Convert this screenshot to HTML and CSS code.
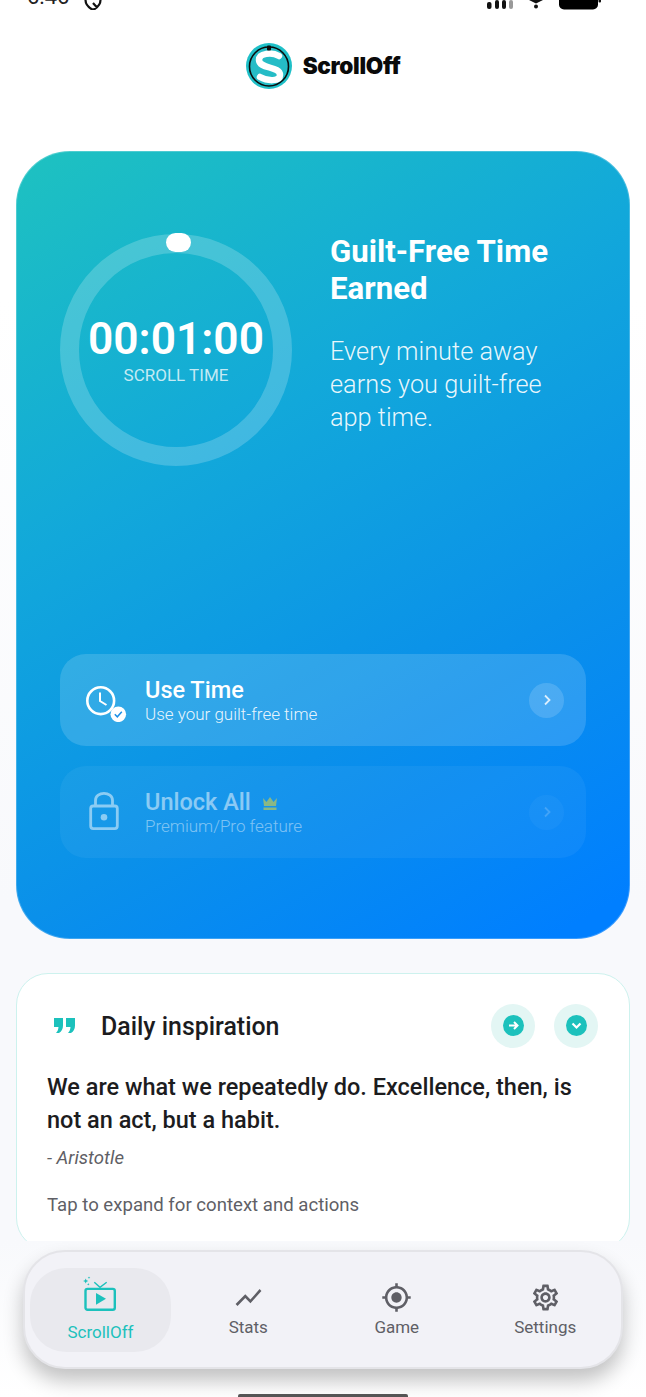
FILE: index.html
```html
<!DOCTYPE html>
<html lang="en">
<head>
  <meta charset="UTF-8">
  <meta name="viewport" content="width=device-width, initial-scale=1.0">
  <title>ScrollOff</title>
  <link rel="stylesheet" href="styles.css">
</head>
<body>

  <div id="screen">
    <div class="content">

      <!-- Status bar, cut off by the top of the screen -->
      <div class="status">
        <div class="status-left">
          <span class="clock-text">6:46</span>
          <svg class="status-pin" width="18" height="14" viewBox="0 0 18 14"><path d="M1.500 0v2c0 4.500 3 7.500 7.500 10 4.500-2.500 7.500-5.500 7.500-10V0M9 5l4 4.500" fill="none" stroke="#111" stroke-width="2.200"/></svg>
        </div>
        <svg class="status-right" width="116" height="10" viewBox="0 0 116 10">
          <rect x="0" y="2" width="4.500" height="7" rx="2" fill="#111"/>
          <rect x="8" y="0" width="4" height="9" rx="2" fill="#111"/>
          <rect x="15" y="0" width="4" height="9" rx="2" fill="#111"/>
          <rect x="22" y="0" width="4" height="9" rx="2" fill="#999"/>
          <path d="M42 0h14l-7 3.500z" fill="#111"/>
          <circle cx="49" cy="6.500" r="2" fill="#111"/>
          <rect x="72" y="-9" width="39" height="18.500" rx="5" fill="#000"/>
          <rect x="111.500" y="-4" width="2.500" height="6.500" rx="1" fill="#111"/>
        </svg>
      </div>

      <!-- Logo -->
      <div class="brand">
        <svg width="46" height="46" viewBox="0 0 46 46">
          <circle cx="23" cy="23" r="23" fill="#1fc0c8"/>
          <circle cx="23" cy="23.500" r="19.500" fill="#25bcc6" stroke="#0b0b0b" stroke-width="1.600"/>
          <path d="M33 13C26 9 13 10 13 17c0 9 21 6 21 15 0 7-13 6-20 2" fill="none" stroke="#fff" stroke-width="6.500" stroke-linecap="round"/>
          <rect x="21" y="2.500" width="4" height="5" rx="1" fill="#0b0b0b"/>
        </svg>
        <span class="brand-name">ScrollOff</span>
      </div>

      <!-- Main gradient card -->
      <section class="hero">
        <div class="hero-top">
          <div class="ring">
            <svg class="ring-track" width="234" height="234" viewBox="0 0 234 234">
              <circle cx="117" cy="117" r="106.500" fill="none" stroke="rgba(255,255,255,0.2)" stroke-width="19"/>
            </svg>
            <span class="ring-thumb"></span>
            <div class="ring-time">00:01:00</div>
            <div class="ring-label">SCROLL TIME</div>
          </div>
          <div class="hero-copy">
            <h2>Guilt-Free Time Earned</h2>
            <p>Every minute away earns you guilt-free app time.</p>
          </div>
        </div>

        <div class="actions">
          <div class="action">
            <svg class="action-icon" width="44" height="44" viewBox="0 0 44 44">
              <circle cx="16.700" cy="22.700" r="13.400" fill="none" stroke="#fff" stroke-width="2.600"/>
              <path d="M16 14.500v8.500l6.500 4" fill="none" stroke="#fff" stroke-width="2"/>
              <circle cx="34.300" cy="36.300" r="7.800" fill="#fff"/>
              <path d="M30.800 36.300l2.500 2.500 4.500-5" fill="none" stroke="#1b8fe6" stroke-width="1.500"/>
            </svg>
            <div class="action-text">
              <div class="action-title">Use Time</div>
              <div class="action-sub">Use your guilt-free time</div>
            </div>
            <span class="chevron">
              <svg width="12" height="14" viewBox="0 0 12 14"><path d="M4 2.500L8.500 7 4 11.500" fill="none" stroke="#fff" stroke-opacity="0.8" stroke-width="1.800"/></svg>
            </span>
          </div>

          <div class="action locked">
            <svg class="action-icon" width="44" height="44" viewBox="0 0 44 44">
              <path d="M11.500 15v-4.500c0-9.500 17-9.500 17 0V15" fill="none" stroke="#fff" stroke-width="2.800"/>
              <rect x="6.700" y="16" width="26.600" height="22.600" rx="2.500" fill="none" stroke="#fff" stroke-width="2.800"/>
              <circle cx="20" cy="27.300" r="3.300" fill="#fff"/>
            </svg>
            <div class="action-text">
              <div class="action-title">Unlock All
                <svg class="crown" width="16" height="15" viewBox="0 0 16 15"><path d="M1 2l3.500 4L8 1l3.500 5L15 2l-1 8H2zM1.500 11.500h13V14h-13z" fill="#ffdc1e"/></svg>
              </div>
              <div class="action-sub">Premium/Pro feature</div>
            </div>
            <span class="chevron">
              <svg width="12" height="14" viewBox="0 0 12 14"><path d="M4 2.500L8.500 7 4 11.500" fill="none" stroke="#fff" stroke-opacity="0.8" stroke-width="1.800"/></svg>
            </span>
          </div>
        </div>
      </section>

      <!-- Quote card, runs under the tab bar -->
      <section class="quote">
        <div class="quote-head">
          <svg class="quote-mark" width="21" height="15" viewBox="0 0 21 15"><path d="M0 0h9v7.500C9 11 7.500 13.500 5 15H2c1.500-1.500 2.300-3.300 2.500-6H0zM12 0h9v7.500c0 3.500-1.500 6-4 7.500h-3c1.500-1.500 2.300-3.300 2.500-6H12z" fill="#1cc1bc"/></svg>
          <h3>Daily inspiration</h3>
          <span class="round-btn">
            <span class="round-inner">
              <svg width="13" height="13" viewBox="0 0 13 13"><path d="M2 6.500h8M7 3l3.500 3.500L7 10" fill="none" stroke="#fff" stroke-width="2"/></svg>
            </span>
          </span>
          <span class="round-btn">
            <span class="round-inner">
              <svg width="13" height="13" viewBox="0 0 13 13"><path d="M2.500 4.500l4 4 4-4" fill="none" stroke="#fff" stroke-width="2.200"/></svg>
            </span>
          </span>
        </div>
        <p class="quote-text">We are what we repeatedly do. Excellence, then, is not an act, but a habit.</p>
        <p class="quote-author">- Aristotle</p>
        <p class="quote-hint">Tap to expand for context and actions</p>
      </section>
    </div>

    <!-- Bottom tab bar -->
    <nav class="tabbar">
      <div class="tab active">
        <svg width="38" height="38" viewBox="0 0 38 38">
          <path d="M3.700 2.400l.8 1.800 1.800.8-1.800.8-.8 1.800-.8-1.800-1.800-.8 1.800-.8zM7 .4l.4.9.9.4-.9.4-.4.9-.4-.9-.9-.4.9-.4zM6.300 7l.4.9.9.4-.9.4-.4.9-.4-.9-.9-.4.9-.4z" fill="#1cc1bc"/>
          <path d="M12.300 6.300l5.700 5 6.700-5" fill="none" stroke="#1cc1bc" stroke-width="1.400"/>
          <rect x="3.500" y="12.900" width="29.300" height="20.900" rx="2" fill="none" stroke="#1cc1bc" stroke-width="2.400"/>
          <path d="M14 17v11.700l10-5.900z" fill="#1cc1bc"/>
        </svg>
        <span>ScrollOff</span>
      </div>
      <div class="tab">
        <svg width="31" height="31" viewBox="0 0 24 24"><path d="M3.500 18.490l6-6.010 4 4L22 6.920l-1.410-1.410-7.090 7.970-4-4L2 16.990z" fill="#5f5f66"/></svg>
        <span>Stats</span>
      </div>
      <div class="tab">
        <svg width="31" height="31" viewBox="0 0 24 24"><path d="M12 8c-2.210 0-4 1.790-4 4s1.790 4 4 4 4-1.790 4-4-1.790-4-4-4zm8.940 3c-.46-4.170-3.770-7.480-7.940-7.940V1h-2v2.060C6.830 3.520 3.520 6.830 3.060 11H1v2h2.060c.46 4.170 3.770 7.480 7.940 7.940V23h2v-2.060c4.170-.46 7.480-3.770 7.940-7.940H23v-2h-2.060zM12 19c-3.870 0-7-3.130-7-7s3.130-7 7-7 7 3.130 7 7-3.130 7-7 7z" fill="#5f5f66"/></svg>
        <span>Game</span>
      </div>
      <div class="tab">
        <svg width="31" height="31" viewBox="0 0 24 24"><path d="M19.430 12.980c.04-.32.07-.64.07-.98 0-.34-.03-.66-.07-.98l2.110-1.650c.19-.15.24-.42.12-.64l-2-3.460c-.09-.16-.26-.25-.44-.25-.06 0-.12.01-.17.03l-2.490 1c-.52-.4-1.080-.73-1.690-.98l-.38-2.650C14.460 2.180 14.250 2 14 2h-4c-.25 0-.46.18-.49.42l-.38 2.650c-.61.25-1.170.59-1.690.98l-2.490-1c-.06-.02-.12-.03-.18-.03-.17 0-.34.09-.43.25l-2 3.460c-.13.22-.07.49.12.64l2.110 1.650c-.04.32-.07.65-.07.98 0 .33.03.66.07.98l-2.110 1.650c-.19.15-.24.42-.12.64l2 3.460c.09.16.26.25.44.25.06 0 .12-.01.17-.03l2.490-1c.52.4 1.080.73 1.690.98l.38 2.650c.03.24.24.42.49.42h4c.25 0 .46-.18.49-.42l.38-2.650c.61-.25 1.170-.59 1.690-.98l2.490 1c.06.02.12.03.18.03.17 0 .34-.09.43-.25l2-3.460c.12-.22.07-.49-.12-.64l-2.110-1.650zm-1.980-1.710c.04.31.05.52.05.73 0 .21-.02.43-.05.73l-.14 1.130.89.7 1.080.84-.7 1.210-1.270-.51-1.040-.42-.9.68c-.43.32-.84.56-1.250.73l-1.060.43-.16 1.130-.2 1.350h-1.400l-.19-1.350-.16-1.130-1.060-.43c-.43-.18-.83-.41-1.230-.71l-.91-.7-1.060.43-1.270.51-.7-1.210 1.080-.84.89-.7-.14-1.130c-.03-.31-.05-.54-.05-.74s.02-.43.05-.73l.14-1.130-.89-.7-1.080-.84.7-1.210 1.270.51 1.040.42.9-.68c.43-.32.84-.56 1.250-.73l1.060-.43.16-1.130.2-1.350h1.390l.19 1.350.16 1.130 1.060.43c.43.18.83.41 1.230.71l.91.7 1.060-.43 1.270-.51.7 1.210-1.070.85-.89.7.14 1.130zM12 8c-2.210 0-4 1.790-4 4s1.790 4 4 4 4-1.790 4-4-1.790-4-4-4zm0 6c-1.100 0-2-.9-2-2s.9-2 2-2 2 .9 2 2-.9 2-2 2z" fill="#5f5f66"/></svg>
        <span>Settings</span>
      </div>
    </nav>

    <div class="home-bar"></div>
  </div>

</body>
</html>
```

FILE: styles.css
```css
/* Base styling */
* {
  margin: 0;
  padding: 0;
  box-sizing: border-box;
  font-family: 'Roboto', sans-serif;
}

body {
  background-color: #fff;
}

#screen {
  width: 646px;
  height: 1397px;
  overflow: hidden;
  display: flex;
  flex-direction: column;
  background: linear-gradient(to bottom, #fff 0, #fff 300px, #f8f9fc 900px, #f8f9fc 1240px, #fff 1397px);
}

.content {
  height: 1241px;
  overflow: hidden;
  flex: none;
}

/* Status bar */
.status {
  height: 10px;
  display: flex;
  justify-content: space-between;
  align-items: flex-end;
  padding: 0 26px 0 27px;
  overflow: hidden;
}

.status-left {
  display: flex;
  align-items: flex-end;
  gap: 15px;
}

.clock-text {
  font-size: 22px;
  line-height: 26px;
  color: #222;
}

.status-pin {
  display: block;
  margin-bottom: -2px;
}

.status-right {
  display: block;
  margin-right: 17px;
}

/* Logo */
.brand {
  height: 141px;
  padding-bottom: 30px;
  display: flex;
  align-items: center;
  justify-content: center;
  gap: 11px;
}

.brand-name {
  font-family: 'Inter', sans-serif;
  font-size: 22.500px;
  font-weight: 900;
  color: #0a0a0a;
  letter-spacing: -0.3px;
}

/* Hero card */
.hero {
  height: 788px;
  margin: 0 16px;
  padding: 81px 43px 80px;
  display: flex;
  flex-direction: column;
  border: 1px solid rgba(255, 255, 255, 0.22);
  border-radius: 54px;
  background: linear-gradient(150deg, #1ec2c0 0%, #12a8da 36%, #0a90ea 68%, #007fff 96%) border-box;
}

.hero-top {
  display: flex;
  gap: 37px;
}

.ring {
  position: relative;
  flex: none;
  width: 234px;
  height: 234px;
  margin-left: -1px;
  padding-bottom: 3px;
  display: flex;
  flex-direction: column;
  align-items: center;
  justify-content: center;
}

.ring-track {
  position: absolute;
  left: 0;
  top: 0;
}

.ring-thumb {
  position: absolute;
  left: 107px;
  top: 0;
  width: 25px;
  height: 19px;
  border-radius: 10px;
  background-color: #fff;
}

.ring-time {
  font-size: 44.300px;
  line-height: 52px;
  font-weight: 600;
  color: #fff;
}

.ring-label {
  font-size: 17px;
  line-height: 20px;
  color: rgba(255, 255, 255, 0.75);
}

.hero-copy h2 {
  font-size: 31.200px;
  line-height: 37px;
  font-weight: 700;
  color: #fff;
  margin-bottom: 28px;
}

.hero-copy p {
  font-size: 25.300px;
  line-height: 33px;
  font-weight: 300;
  color: rgba(255, 255, 255, 0.92);
}

/* Use Time / Unlock All rows */
.actions {
  margin-top: auto;
  display: flex;
  flex-direction: column;
  gap: 20px;
}

.action {
  height: 92px;
  padding: 0 22px 0 24px;
  display: flex;
  align-items: center;
  border-radius: 26px;
  background-color: rgba(255, 255, 255, 0.15);
}

.action-icon {
  flex: none;
  display: block;
}

.action-text {
  flex: 1;
  margin-left: 17px;
}

.action-title {
  font-size: 23.500px;
  line-height: 27px;
  font-weight: 500;
  color: #fff;
}

.action-sub {
  font-size: 17px;
  line-height: 20px;
  font-weight: 300;
  color: rgba(255, 255, 255, 0.9);
}

.chevron {
  flex: none;
  width: 35px;
  height: 35px;
  border-radius: 50%;
  display: flex;
  align-items: center;
  justify-content: center;
  background-color: rgba(255, 255, 255, 0.15);
}

.locked {
  background-color: rgba(255, 255, 255, 0.05);
}

.locked > * {
  opacity: 0.5;
}

.locked .chevron {
  opacity: 0.25;
}

.crown {
  margin-left: 5px;
  vertical-align: -1px;
}

/* Quote card */
.quote {
  height: 277px;
  margin: 34px 16px 0;
  padding: 29.500px 30px 0;
  border: 1px solid #cdf2ee;
  border-radius: 32px;
  background-color: #fff;
}

.quote-head {
  display: flex;
  align-items: center;
  gap: 19px;
  height: 44px;
  margin-right: 1px;
}

.quote-mark {
  margin-left: 7px;
  margin-right: 7px;
}

.quote-head h3 {
  flex: 1;
  margin-top: 2px;
  font-size: 24.900px;
  font-weight: 500;
  color: #1c1c1e;
}

.round-btn {
  width: 44px;
  height: 44px;
  border-radius: 50%;
  display: flex;
  align-items: center;
  justify-content: center;
  background-color: #e3f6f4;
}

.round-inner {
  width: 21px;
  height: 21px;
  border-radius: 50%;
  display: flex;
  align-items: center;
  justify-content: center;
  background-color: #1cc1bc;
}

.quote-text {
  margin-top: 23px;
  font-size: 23.500px;
  line-height: 33px;
  font-weight: 500;
  color: #1c1c1e;
}

.quote-author {
  margin-top: 10.500px;
  font-size: 18.600px;
  line-height: 22px;
  font-style: italic;
  color: #5f5f66;
}

.quote-hint {
  margin-top: 25px;
  font-size: 18.600px;
  line-height: 22px;
  color: #5f5f66;
}

/* Tab bar */
.tabbar {
  flex: none;
  height: 119px;
  margin: 9px 23px 0;
  padding: 0 1.500px 0 5px;
  display: flex;
  align-items: center;
  border: 2px solid #e4e4e8;
  border-radius: 42px;
  background-color: #f2f2f7;
  box-shadow: 0 12px 20px rgba(0, 0, 0, 0.24);
}

.tab {
  flex: 1;
  height: 84px;
  display: flex;
  flex-direction: column;
  align-items: center;
  justify-content: center;
  gap: 4px;
  font-size: 17px;
  line-height: 21px;
  color: #5f5f66;
}

.tab svg {
  display: block;
}

.tab.active {
  flex: none;
  width: 141px;
  margin-right: 3px;
  gap: 7.500px;
  border-radius: 36px;
  background-color: #e9e9ee;
  color: #1cc1bc;
}

/* Home indicator */
.home-bar {
  flex: none;
  width: 170px;
  height: 3px;
  margin: 25px auto 0;
  border-radius: 2px 2px 0 0;
  background-color: #555;
}
```
